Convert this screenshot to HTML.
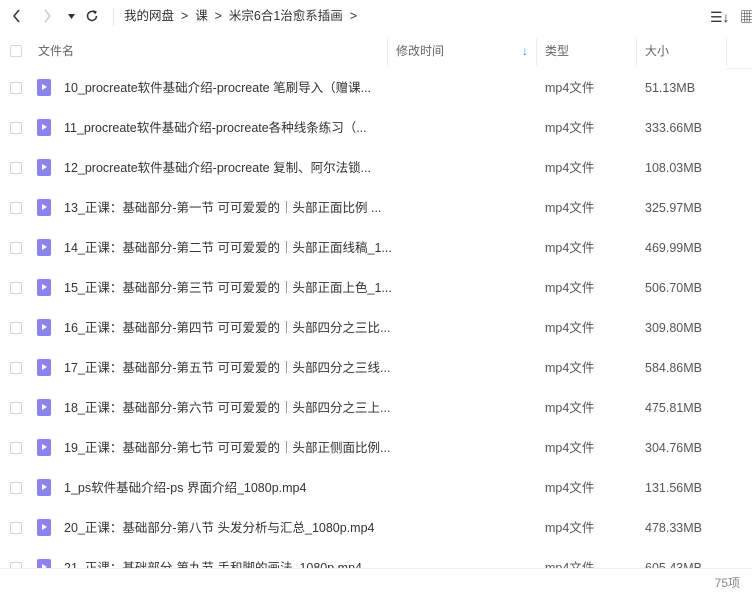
<!DOCTYPE html>
<html><head><meta charset="utf-8"><style>
*{margin:0;padding:0;box-sizing:border-box}
body{width:752px;height:592px;overflow:hidden;background:#fff;font-family:"Liberation Sans","Noto Sans CJK SC",sans-serif;font-size:12.5px;color:#333;position:relative;line-height:16px}
.top{position:absolute;top:0;left:0;width:752px;height:34px;background:#fff}
.t{position:absolute;white-space:nowrap;line-height:16px}
.hdr{position:absolute;top:36px;left:0;width:752px;height:32px;color:#666;font-size:12px}
.sep{position:absolute;top:38px;width:1px;height:28px;background:#eee}
.row{position:absolute;left:0;width:752px;height:40px}
.cb{position:absolute;left:10px;width:12px;height:12px;border:1px solid #d6d6d6;border-radius:2px}
.ic{position:absolute;left:37px;width:14px;height:17px;background:#8c83f0;border-radius:2px}
.ic:after{content:"";position:absolute;left:5px;top:5px;border-left:5px solid #fff;border-top:3.5px solid transparent;border-bottom:3.5px solid transparent}
.foot{position:absolute;top:568px;left:0;width:752px;height:24px;background:#fff;border-top:1px solid #f0f0f0}
</style></head><body>
<div class="top">
<svg style="position:absolute;left:12px;top:9px" width="10" height="14"><path d="M7 1L2 7l5 6" stroke="#333" stroke-width="1.5" fill="none"/></svg>
<svg style="position:absolute;left:42px;top:9px" width="10" height="14"><path d="M3 1l5 6-5 6" stroke="#ccc" stroke-width="1.5" fill="none"/></svg>
<svg style="position:absolute;left:68px;top:14px" width="8" height="6"><path d="M0 0h7L3.5 5z" fill="#333"/></svg>
<svg style="position:absolute;left:85px;top:9px" width="14" height="14"><path d="M11.5 7A4.5 4.5 0 1 1 9.5 3.2" stroke="#333" stroke-width="1.5" fill="none"/><path d="M8 1l4 1.5-2 3z" fill="#333"/></svg>
<div style="position:absolute;left:113px;top:8px;width:1px;height:18px;background:#e5e5e5"></div>
<div class="t" style="left:124px;top:8px;font-size:12.5px">我的网盘 &nbsp;&gt;&nbsp; 课 &nbsp;&gt;&nbsp; 米宗6合1治愈系插画 &nbsp;&gt;</div>
<div class="t" style="left:710px;top:9px;font-size:14px">☰↓</div>
<div class="t" style="left:740px;top:9px;font-size:14px">▦</div>
</div>
<div class="hdr">
<div class="cb" style="top:9px"></div>
<div class="t" style="left:38px;top:7px">文件名</div>
<div class="t" style="left:396px;top:7px">修改时间</div>
<div class="t" style="left:522px;top:7px;color:#1e88e5;font-size:12px;font-weight:bold">↓</div>
<div class="t" style="left:545px;top:7px">类型</div>
<div class="t" style="left:645px;top:7px">大小</div>
</div>
<div class="sep" style="left:387px"></div><div class="sep" style="left:536px"></div><div class="sep" style="left:636px"></div><div class="sep" style="left:726px"></div>
<div style="position:absolute;top:68px;left:726px;width:26px;height:1px;background:#eee"></div>
<div id="rows"></div>
<script>
var d=[["10_procreate软件基础介绍-procreate 笔刷导入（赠课...","51.13MB"],["11_procreate软件基础介绍-procreate各种线条练习（...","333.66MB"],["12_procreate软件基础介绍-procreate 复制、阿尔法锁...","108.03MB"],["13_正课：基础部分-第一节 可可爱爱的｜头部正面比例 ...","325.97MB"],["14_正课：基础部分-第二节 可可爱爱的｜头部正面线稿_1...","469.99MB"],["15_正课：基础部分-第三节 可可爱爱的｜头部正面上色_1...","506.70MB"],["16_正课：基础部分-第四节 可可爱爱的｜头部四分之三比...","309.80MB"],["17_正课：基础部分-第五节 可可爱爱的｜头部四分之三线...","584.86MB"],["18_正课：基础部分-第六节 可可爱爱的｜头部四分之三上...","475.81MB"],["19_正课：基础部分-第七节 可可爱爱的｜头部正侧面比例...","304.76MB"],["1_ps软件基础介绍-ps 界面介绍_1080p.mp4","131.56MB"],["20_正课：基础部分-第八节 头发分析与汇总_1080p.mp4","478.33MB"],["21_正课：基础部分-第九节 手和脚的画法_1080p.mp4","605.43MB"]];
var h="";d.forEach(function(r,i){var y=68+i*40;h+='<div class="row" style="top:'+y+'px"><div class="cb" style="top:14px"></div><div class="ic" style="top:11px"></div><div class="t" style="left:64px;top:12px">'+r[0]+'</div><div class="t" style="left:545px;top:12px;color:#555">mp4文件</div><div class="t" style="left:645px;top:12px;color:#555">'+r[1]+'</div></div>';});
document.getElementById("rows").innerHTML=h;
</script>
<div class="foot"><div class="t" style="right:12px;top:6px;color:#888;font-size:12px">75项</div></div>
</body></html>
